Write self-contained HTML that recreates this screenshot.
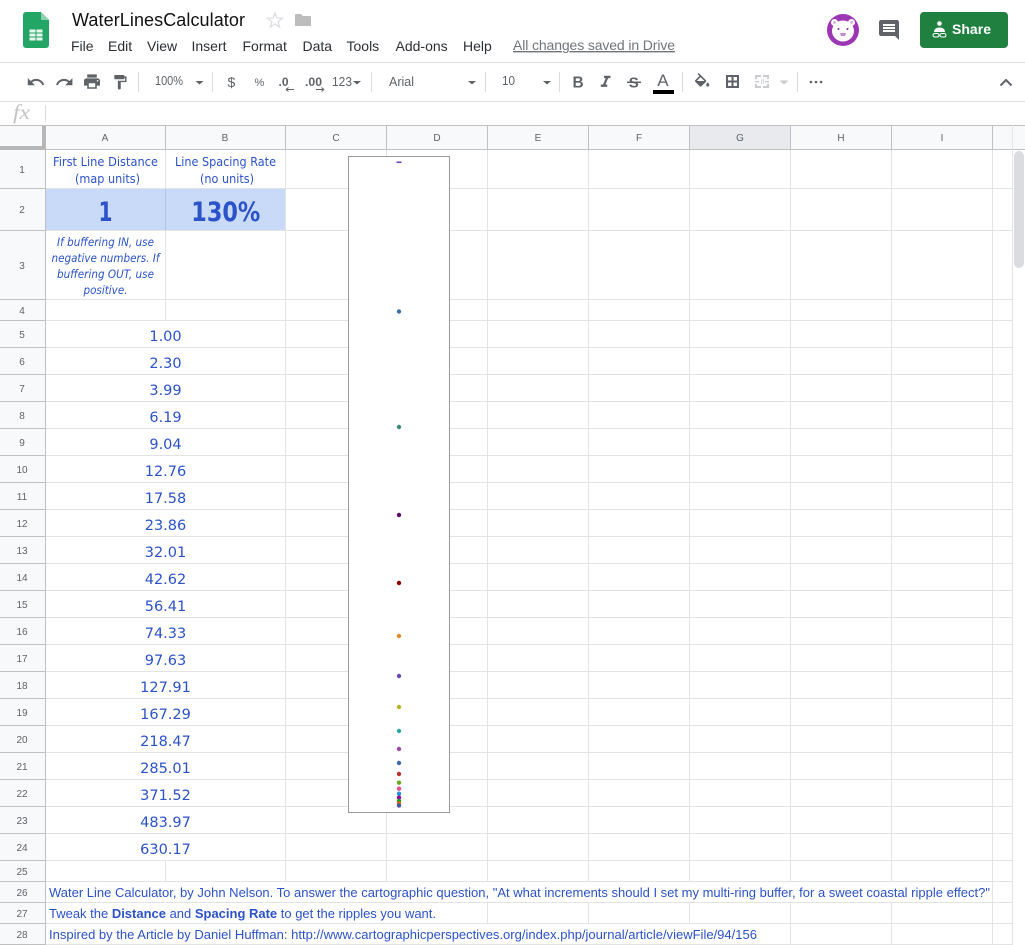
<!DOCTYPE html>
<html><head><meta charset="utf-8"><title>WaterLinesCalculator</title>
<style>
html,body{margin:0;padding:0;background:#fff;width:1025px;height:945px;overflow:hidden}
svg{display:block;font-family:"Liberation Sans",sans-serif}
.menu{font-size:14px;fill:#2b2f33}
.tb{font-size:13px;fill:#5f6368}
.hd{font-size:10px;fill:#5f6368;text-anchor:middle}
.c{font-family:"DejaVu Sans",sans-serif;fill:#2b52c9;text-anchor:middle}
.s{font-size:13px;fill:#2b52c9}
.n{font-size:14.5px}
.i{font-size:11.5px;font-style:italic}
</style></head><body>
<svg width="1025" height="945" viewBox="0 0 1025 945" xmlns="http://www.w3.org/2000/svg">
<rect width="1025" height="945" fill="#fff"/>
<!-- logo -->
<path d="M26 12h15l8 8v25a3 3 0 0 1-3 3H26a3 3 0 0 1-3-3V15a3 3 0 0 1 3-3z" fill="#23a566"/>
<path d="M41 12l8 8h-8z" fill="#8ed1b1"/>
<g fill="#e8f5ee"><rect x="29.500" y="29.500" width="6" height="3"/><rect x="36.500" y="29.500" width="6" height="3"/><rect x="29.500" y="33.500" width="6" height="3"/><rect x="36.500" y="33.500" width="6" height="3"/><rect x="29.500" y="37.500" width="6" height="3"/><rect x="36.500" y="37.500" width="6" height="3"/></g>
<!-- title -->
<text x="72" y="26" font-size="18" fill="#111" textLength="173">WaterLinesCalculator</text>
<path d="M275 13l1.900 5.100 5.600.2-4.400 3.400 1.500 5.400-4.600-3.100-4.600 3.100 1.500-5.400-4.400-3.400 5.600-.2z" fill="none" stroke="#dadce0" stroke-width="1.200"/>
<path d="M296 14h5l2 2h7a1 1 0 0 1 1 1v9h-16V15a1 1 0 0 1 1-1z" fill="#bdbdbd"/>
<text class="menu" x="71" y="51">File</text>
<text class="menu" x="108" y="51">Edit</text>
<text class="menu" x="147" y="51">View</text>
<text class="menu" x="191.500" y="51">Insert</text>
<text class="menu" x="242.500" y="51">Format</text>
<text class="menu" x="302.500" y="51">Data</text>
<text class="menu" x="346.500" y="51">Tools</text>
<text class="menu" x="395.500" y="51">Add-ons</text>
<text class="menu" x="463" y="51">Help</text>
<text x="513" y="50" font-size="14" fill="#70757a" text-decoration="underline" textLength="162">All changes saved in Drive</text>
<!-- avatar -->
<circle cx="843" cy="30" r="16" fill="#9c36b5"/>
<circle cx="834.500" cy="22.500" r="3.500" fill="#fff"/><circle cx="851.500" cy="22.500" r="3.500" fill="#fff"/>
<circle cx="834.500" cy="22.500" r="1.500" fill="#d9b3e3"/><circle cx="851.500" cy="22.500" r="1.500" fill="#d9b3e3"/>
<ellipse cx="843" cy="31" rx="11" ry="10.500" fill="#fff"/>
<circle cx="838.500" cy="29" r="1" fill="#7b2b90"/><circle cx="847.500" cy="29" r="1" fill="#7b2b90"/>
<path d="M840 33h6l-1 3h-4z" fill="#c28ad0"/>
<!-- comment -->
<path transform="translate(877,18)" d="M21.990 4c0-1.100-.890-2-1.990-2H4c-1.100 0-2 .900-2 2v12c0 1.100.900 2 2 2h14l4 4-.010-18zM18 14H6v-2h12v2zm0-3H6V9h12v2zm0-3H6V6h12v2z" fill="#5f6368"/>
<!-- share -->
<rect x="920" y="12" width="88" height="36" rx="4" fill="#20803f"/>
<circle cx="939.500" cy="23.500" r="2.300" fill="#fff"/>
<path d="M934 32c0-3 2.500-4.500 5.500-4.500s5.500 1.500 5.500 4.500z" fill="#fff"/>
<rect x="933" y="33.500" width="6" height="3.500" rx="1.700" fill="none" stroke="#fff"/><rect x="940" y="33.500" width="6" height="3.500" rx="1.700" fill="none" stroke="#fff"/>
<text x="952" y="34" font-size="14" font-weight="700" fill="#fff" textLength="39">Share</text>
<!-- toolbar borders -->
<rect x="0" y="62" width="1025" height="1" fill="#dadce0"/>
<rect x="0" y="101" width="1025" height="1" fill="#e0e0e0"/>
<g fill="#dadce0">
<rect x="138" y="72" width="1" height="20"/><rect x="212" y="72" width="1" height="20"/><rect x="371" y="72" width="1" height="20"/><rect x="485" y="72" width="1" height="20"/><rect x="559" y="72" width="1" height="20"/><rect x="682" y="72" width="1" height="20"/><rect x="797" y="72" width="1" height="20"/>
</g>
<!-- toolbar icons -->
<path transform="translate(26.200,72.500) scale(.8)" d="M12.500 8c-2.650 0-5.050.990-6.900 2.600L2 7v9h9l-3.620-3.620c1.390-1.160 3.160-1.880 5.120-1.880 3.540 0 6.550 2.310 7.600 5.500l2.370-.780C21.080 11.030 17.150 8 12.500 8z" fill="#5f6368"/>
<path transform="translate(54.800,72.500) scale(.8)" d="M18.400 10.600C16.550 8.990 14.150 8 11.500 8c-4.650 0-8.580 3.030-9.960 7.220L3.900 16c1.050-3.190 4.050-5.500 7.600-5.500 1.950 0 3.730.720 5.120 1.880L13 16h9V7l-3.600 3.600z" fill="#5f6368"/>
<path transform="translate(82.400,72) scale(.8)" d="M19 8H5c-1.660 0-3 1.340-3 3v6h4v4h12v-4h4v-6c0-1.660-1.340-3-3-3zm-3 11H8v-5h8v5zm3-7c-.550 0-1-.450-1-1s.450-1 1-1 1 .450 1 1-.450 1-1 1zm-1-9H6v4h12V3z" fill="#5f6368"/>
<path transform="translate(111.400,73.500) scale(.72)" d="M18 4V3c0-.550-.450-1-1-1H5c-.550 0-1 .450-1 1v4c0 .550.450 1 1 1h12c.550 0 1-.450 1-1V6h1v4H9v11c0 .550.450 1 1 1h2c.550 0 1-.450 1-1v-9h8V4h-3z" fill="#5f6368"/>
<text class="tb" x="155" y="85" textLength="28" lengthAdjust="spacingAndGlyphs">100%</text>
<path d="M195.500 81h8l-4 3.500z" fill="#5f6368"/>
<text class="tb" x="227.500" y="87" style="font-size:14px">$</text>
<text class="tb" x="254.500" y="86" style="font-size:11px">%</text>
<text class="tb" x="278.500" y="86" style="font-size:12px;font-weight:700">.0</text>
<path d="M286 89.500h8M286 89.500l2.500-2M286 89.500l2.500 2" stroke="#5f6368" fill="none"/>
<text class="tb" x="305" y="86" textLength="17" lengthAdjust="spacingAndGlyphs" style="font-size:12px;font-weight:700">.00</text>
<path d="M316 89.500h8M324 89.500l-2.500-2M324 89.500l-2.500 2" stroke="#5f6368" fill="none"/>
<text class="tb" x="332" y="86" textLength="20" lengthAdjust="spacingAndGlyphs">123</text>
<path d="M353 81h8l-4 3.500z" fill="#5f6368"/>
<text class="tb" x="389" y="86" textLength="25" lengthAdjust="spacingAndGlyphs">Arial</text>
<path d="M468 81h8l-4 3.500z" fill="#5f6368"/>
<text class="tb" x="502" y="85" textLength="13" lengthAdjust="spacingAndGlyphs">10</text>
<path d="M543 81h8l-4 3.500z" fill="#5f6368"/>
<text x="572.500" y="87.500" font-size="15.500" font-weight="700" fill="#5f6368">B</text>
<path transform="translate(596,72.500) scale(.8)" d="M10 4v3h2.210l-3.420 8H6v3h8v-3h-2.210l3.420-8H18V4z" fill="#5f6368"/>
<text x="628.800" y="87.500" font-size="15" font-weight="700" fill="#5f6368">S</text>
<rect x="627" y="81.500" width="14" height="1.500" fill="#5f6368"/>
<text x="657.300" y="86" font-size="17" fill="#5f6368">A</text>
<rect x="653" y="90" width="21" height="4" fill="#000"/>
<path transform="translate(692.600,73) scale(.8)" d="M16.560 8.940L7.620 0 6.210 1.410l2.380 2.380-5.150 5.150c-.590.590-.590 1.540 0 2.120l5.500 5.500c.290.290.680.440 1.060.440s.770-.150 1.060-.440l5.500-5.500c.590-.580.590-1.530 0-2.120zM5.210 10L10 5.210 14.790 10H5.210zM19 11.500s-2 2.170-2 3.500c0 1.100.900 2 2 2s2-.900 2-2c0-1.330-2-3.500-2-3.500z" fill="#5f6368"/>
<path d="M726 75h13v13h-13zM728 77v3.500h3.500V77zM733.500 77v3.500h3.500V77zM728 82.500V86h3.500v-3.500zM733.500 82.500V86h3.500v-3.500z" fill="#5f6368" fill-rule="evenodd"/>
<g fill="#c9cbce"><path d="M755 75h6v2h-6zM763 75h6v2h-6zM755 86h6v2h-6zM763 86h6v2h-6zM755 75h2v4h-2zM767 75h2v4h-2zM755 84h2v4h-2zM767 84h2v4h-2zM755 81h4v1.400h-4zM765 81h4v1.400h-4z"/><path d="M761 79v5h.8v-5zM763 79v5h.8v-5z"/></g>
<path d="M779.500 80.500h9l-4.500 4z" fill="#c9cbce"/>
<circle cx="811" cy="82" r="1.300" fill="#5f6368"/><circle cx="816" cy="82" r="1.300" fill="#5f6368"/><circle cx="821" cy="82" r="1.300" fill="#5f6368"/>
<path d="M1000.500 85.500l5.500-5.500 5.500 5.500" fill="none" stroke="#5f6368" stroke-width="2"/>
<!-- formula bar -->
<text x="13" y="119" font-family="Liberation Serif" font-style="italic" font-size="21" fill="#c4c4c4" textLength="17" lengthAdjust="spacingAndGlyphs">fx</text>
<rect x="45" y="105" width="1" height="17" fill="#dadce0"/>
<!-- header fills -->
<rect x="0" y="125" width="1013" height="25" fill="#f8f9fa"/>
<rect x="0" y="150" width="45" height="795" fill="#f8f9fa"/>
<rect x="689" y="125" width="101" height="24" fill="#e8eaed"/>
<rect x="0" y="125" width="1025" height="1" fill="#c0c0c0"/>
<!-- row 2 fill -->
<rect x="46" y="189" width="240" height="41" fill="#c9daf8"/>
<!-- vertical grid -->
<g fill="#e2e3e3">
<rect x="165" y="150" width="1" height="170"/><rect x="165" y="861" width="1" height="20"/>
<rect x="285" y="150" width="1" height="731"/>
<rect x="386" y="150" width="1" height="731"/>
<rect x="487" y="150" width="1" height="731"/><rect x="487" y="903" width="1" height="20"/>
<rect x="588" y="150" width="1" height="731"/><rect x="588" y="903" width="1" height="20"/>
<rect x="689" y="150" width="1" height="731"/><rect x="689" y="903" width="1" height="20"/>
<rect x="790" y="150" width="1" height="731"/><rect x="790" y="903" width="1" height="41"/>
<rect x="891" y="150" width="1" height="731"/><rect x="891" y="903" width="1" height="41"/>
<rect x="992" y="150" width="1" height="795"/>
<!-- horizontal grid -->
<rect x="46" y="188" width="967" height="1"/><rect x="46" y="230" width="967" height="1"/><rect x="46" y="299" width="967" height="1"/><rect x="46" y="320" width="967" height="1"/>
<rect x="46" y="347" width="967" height="1"/><rect x="46" y="374" width="967" height="1"/><rect x="46" y="401" width="967" height="1"/><rect x="46" y="428" width="967" height="1"/><rect x="46" y="455" width="967" height="1"/>
<rect x="46" y="482" width="967" height="1"/><rect x="46" y="509" width="967" height="1"/><rect x="46" y="536" width="967" height="1"/><rect x="46" y="563" width="967" height="1"/><rect x="46" y="590" width="967" height="1"/>
<rect x="46" y="617" width="967" height="1"/><rect x="46" y="644" width="967" height="1"/><rect x="46" y="671" width="967" height="1"/><rect x="46" y="698" width="967" height="1"/><rect x="46" y="725" width="967" height="1"/>
<rect x="46" y="752" width="967" height="1"/><rect x="46" y="779" width="967" height="1"/><rect x="46" y="806" width="967" height="1"/><rect x="46" y="833" width="967" height="1"/><rect x="46" y="860" width="967" height="1"/>
<rect x="46" y="881" width="967" height="1"/><rect x="46" y="902" width="967" height="1"/><rect x="46" y="923" width="967" height="1"/><rect x="46" y="944" width="967" height="1"/>
</g>
<rect x="165" y="189" width="1" height="41" fill="#b3c4e2"/>
<!-- header lines -->
<g fill="#c0c0c0">
<rect x="0" y="149" width="1013" height="1"/>
<rect x="165" y="125" width="1" height="24"/><rect x="285" y="125" width="1" height="24"/><rect x="386" y="125" width="1" height="24"/><rect x="487" y="125" width="1" height="24"/><rect x="588" y="125" width="1" height="24"/><rect x="689" y="125" width="1" height="24"/><rect x="790" y="125" width="1" height="24"/><rect x="891" y="125" width="1" height="24"/><rect x="992" y="125" width="1" height="24"/>
<rect x="45" y="150" width="1" height="795"/>
<rect x="0" y="188" width="45" height="1"/><rect x="0" y="230" width="45" height="1"/><rect x="0" y="299" width="45" height="1"/><rect x="0" y="320" width="45" height="1"/>
<rect x="0" y="347" width="45" height="1"/><rect x="0" y="374" width="45" height="1"/><rect x="0" y="401" width="45" height="1"/><rect x="0" y="428" width="45" height="1"/><rect x="0" y="455" width="45" height="1"/>
<rect x="0" y="482" width="45" height="1"/><rect x="0" y="509" width="45" height="1"/><rect x="0" y="536" width="45" height="1"/><rect x="0" y="563" width="45" height="1"/><rect x="0" y="590" width="45" height="1"/>
<rect x="0" y="617" width="45" height="1"/><rect x="0" y="644" width="45" height="1"/><rect x="0" y="671" width="45" height="1"/><rect x="0" y="698" width="45" height="1"/><rect x="0" y="725" width="45" height="1"/>
<rect x="0" y="752" width="45" height="1"/><rect x="0" y="779" width="45" height="1"/><rect x="0" y="806" width="45" height="1"/><rect x="0" y="833" width="45" height="1"/><rect x="0" y="860" width="45" height="1"/>
<rect x="0" y="881" width="45" height="1"/><rect x="0" y="902" width="45" height="1"/><rect x="0" y="923" width="45" height="1"/><rect x="0" y="944" width="45" height="1"/>
</g>
<rect x="42" y="126" width="4" height="24" fill="#b7b7b7"/>
<rect x="0" y="146" width="46" height="4" fill="#b7b7b7"/>
<!-- column headers -->
<text class="hd" x="105" y="141">A</text><text class="hd" x="225" y="141">B</text><text class="hd" x="336" y="141">C</text><text class="hd" x="437" y="141">D</text><text class="hd" x="538" y="141">E</text><text class="hd" x="639" y="141">F</text><text class="hd" x="740" y="141">G</text><text class="hd" x="841" y="141">H</text><text class="hd" x="942" y="141">I</text>
<!-- row headers -->
<text class="hd" x="22" y="173">1</text><text class="hd" x="22" y="213">2</text><text class="hd" x="22" y="269">3</text><text class="hd" x="22" y="314">4</text><text class="hd" x="22" y="338">5</text><text class="hd" x="22" y="365">6</text><text class="hd" x="22" y="392">7</text><text class="hd" x="22" y="419">8</text><text class="hd" x="22" y="446">9</text><text class="hd" x="22" y="473">10</text><text class="hd" x="22" y="500">11</text><text class="hd" x="22" y="527">12</text><text class="hd" x="22" y="554">13</text><text class="hd" x="22" y="581">14</text><text class="hd" x="22" y="608">15</text><text class="hd" x="22" y="635">16</text><text class="hd" x="22" y="662">17</text><text class="hd" x="22" y="689">18</text><text class="hd" x="22" y="716">19</text><text class="hd" x="22" y="743">20</text><text class="hd" x="22" y="770">21</text><text class="hd" x="22" y="797">22</text><text class="hd" x="22" y="824">23</text><text class="hd" x="22" y="851">24</text><text class="hd" x="22" y="875">25</text><text class="hd" x="22" y="896">26</text><text class="hd" x="22" y="917">27</text><text class="hd" x="22" y="938">28</text>
<!-- cells -->
<text class="c" x="105.500" y="166" font-size="12" textLength="105" lengthAdjust="spacingAndGlyphs">First Line Distance</text>
<text class="c" x="107.500" y="183" font-size="12" textLength="65" lengthAdjust="spacingAndGlyphs">(map units)</text>
<text class="c" x="225.500" y="166" font-size="12" textLength="101" lengthAdjust="spacingAndGlyphs">Line Spacing Rate</text>
<text class="c" x="227" y="183" font-size="12" textLength="54" lengthAdjust="spacingAndGlyphs">(no units)</text>
<text class="c" x="105.500" y="221" font-size="27" font-weight="700" textLength="14" lengthAdjust="spacingAndGlyphs">1</text>
<text class="c" x="225.800" y="221" font-size="27" font-weight="700" textLength="69" lengthAdjust="spacingAndGlyphs">130%</text>
<text class="c i" x="105.500" y="246" textLength="97" lengthAdjust="spacingAndGlyphs">If buffering IN, use</text>
<text class="c i" x="105.500" y="262" textLength="108" lengthAdjust="spacingAndGlyphs">negative numbers. If</text>
<text class="c i" x="105.500" y="278" textLength="97" lengthAdjust="spacingAndGlyphs">buffering OUT, use</text>
<text class="c i" x="105.500" y="294" textLength="44" lengthAdjust="spacingAndGlyphs">positive.</text>
<text class="c n" x="165.500" y="341">1.00</text>
<text class="c n" x="165.500" y="368">2.30</text>
<text class="c n" x="165.500" y="395">3.99</text>
<text class="c n" x="165.500" y="422">6.19</text>
<text class="c n" x="165.500" y="449">9.04</text>
<text class="c n" x="165.500" y="476">12.76</text>
<text class="c n" x="165.500" y="503">17.58</text>
<text class="c n" x="165.500" y="530">23.86</text>
<text class="c n" x="165.500" y="557">32.01</text>
<text class="c n" x="165.500" y="584">42.62</text>
<text class="c n" x="165.500" y="611">56.41</text>
<text class="c n" x="165.500" y="638">74.33</text>
<text class="c n" x="165.500" y="665">97.63</text>
<text class="c n" x="165.500" y="692">127.91</text>
<text class="c n" x="165.500" y="719">167.29</text>
<text class="c n" x="165.500" y="746">218.47</text>
<text class="c n" x="165.500" y="773">285.01</text>
<text class="c n" x="165.500" y="800">371.52</text>
<text class="c n" x="165.500" y="827">483.97</text>
<text class="c n" x="165.500" y="854">630.17</text>
<text class="s" x="49" y="897" textLength="941" lengthAdjust="spacingAndGlyphs">Water Line Calculator, by John Nelson. To answer the cartographic question, "At what increments should I set my multi-ring buffer, for a sweet coastal ripple effect?"</text>
<text class="s" x="49" y="918" textLength="387" lengthAdjust="spacingAndGlyphs">Tweak the <tspan font-weight="700">Distance</tspan> and <tspan font-weight="700">Spacing Rate</tspan> to get the ripples you want.</text>
<text class="s" x="49" y="939" textLength="708" lengthAdjust="spacingAndGlyphs">Inspired by the Article by Daniel Huffman: http://www.cartographicperspectives.org/index.php/journal/article/viewFile/94/156</text>
<!-- chart -->
<rect x="348.500" y="156.500" width="101" height="656" fill="#fff" stroke="#999"/>
<rect x="396.500" y="161.500" width="5" height="1.500" fill="#6a3aa8"/>
<circle cx="399" cy="311.500" r="2.200" fill="#3f6f9f"/>
<circle cx="399" cy="427" r="2.200" fill="#3b8a7a"/>
<circle cx="399" cy="515" r="2.200" fill="#5a0a6a"/>
<circle cx="399" cy="583" r="2.200" fill="#8b0000"/>
<circle cx="399" cy="636" r="2.200" fill="#e08a2a"/>
<circle cx="399" cy="676" r="2.200" fill="#6a4ab0"/>
<circle cx="399" cy="707" r="2.200" fill="#b5b52a"/>
<circle cx="399" cy="731" r="2.200" fill="#2aa9a0"/>
<circle cx="399" cy="749" r="2.200" fill="#9a4ba5"/>
<circle cx="399" cy="763" r="2.200" fill="#3f6aa5"/>
<circle cx="399" cy="774" r="2.200" fill="#c03030"/>
<circle cx="399" cy="782.700" r="2.200" fill="#6aa820"/>
<circle cx="399" cy="788.700" r="2.200" fill="#e0508a"/>
<circle cx="399" cy="793.700" r="2.200" fill="#2a8fd8"/>
<circle cx="399" cy="797.700" r="2.200" fill="#8f0a9a"/>
<circle cx="399" cy="801" r="2.200" fill="#1f9a1f"/>
<circle cx="399" cy="803.500" r="2.200" fill="#e8660f"/>
<circle cx="399" cy="805.500" r="2.200" fill="#4a5a9a"/>
<!-- scrollbar -->
<rect x="1012" y="125" width="1" height="820" fill="#e2e3e3"/>
<rect x="1013" y="126" width="12" height="23" fill="#f8f9fa"/>
<rect x="1013" y="149" width="12" height="1" fill="#c0c0c0"/>
<rect x="1014" y="151" width="10" height="117" rx="5" fill="#dadce0"/>
</svg>
</body></html>
